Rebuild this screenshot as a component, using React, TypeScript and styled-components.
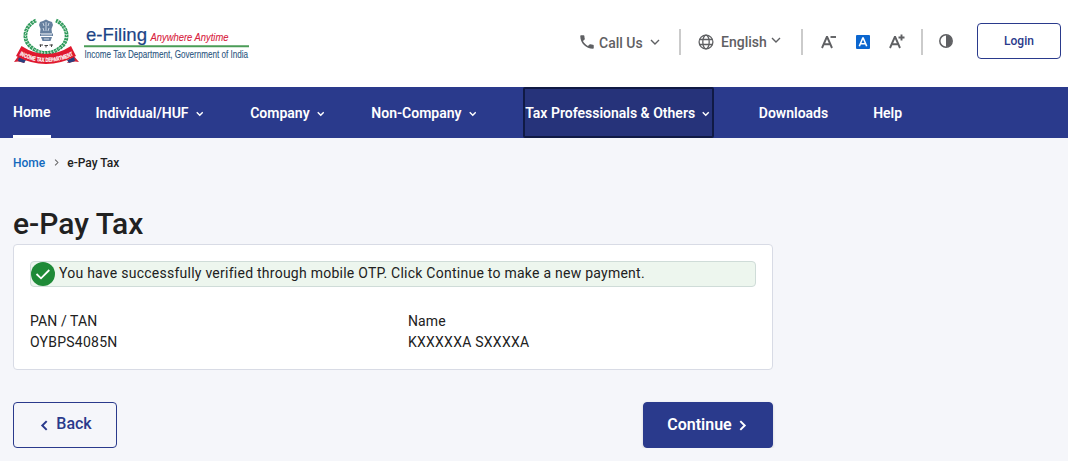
import React from "react";
import styled, { createGlobalStyle, css } from "styled-components";

const navy = "#2a3a8c";
const grey = "#5f6063";

const GlobalStyle = createGlobalStyle`
  * {
    box-sizing: border-box;
  }

  body {
    margin: 0;
    background: #f5f6fa;
    color: #212121;
    font-family: Roboto, "Liberation Sans", sans-serif;
    overflow: hidden;
  }

  button {
    font-family: inherit;
    cursor: pointer;
  }
`;

const Header = styled.header`
  display: flex;
  align-items: flex-start;
  justify-content: space-between;
  height: 87px;
  padding: 16px 7px 0 13px;
  background: #fff;
`;

const LogoImage = styled.svg`
  overflow: visible;
`;

const Tools = styled.div`
  display: flex;
  align-items: center;
  height: 36px;
  margin-top: 7px;
`;

const ToolItem = styled.button<{ $width: number; $indent?: number }>`
  display: flex;
  align-items: center;
  width: ${(props) => props.$width}px;
  height: 36px;
  padding: 2px 0 0 ${(props) => props.$indent || 0}px;
  border: 0;
  background: none;
  color: ${grey};
  font-size: 14px;
  font-weight: 500;
`;

const ToolLabel = styled.span<{ $before: number; $after: number; $lift?: number }>`
  margin: 0 ${(props) => props.$after}px ${(props) => props.$lift || 0}px
    ${(props) => props.$before}px;
  padding-top: 1px;
  white-space: nowrap;

  & + svg {
    margin-bottom: ${(props) => (props.$lift || 0) * 2}px;
  }
`;

const Divider = styled.span`
  width: 2px;
  height: 26px;
  margin-top: 2px;
  background: #cbcbcb;
`;

const FontTools = styled.div`
  display: flex;
  align-items: center;
  justify-content: space-between;
  width: 84px;
  margin: 1px 16px 0 18px;
`;

const ContrastTool = styled.div`
  display: flex;
  margin: 0 24px 0 16px;
`;

const LoginButton = styled.button`
  width: 84px;
  height: 36px;
  border: 1px solid ${navy};
  border-radius: 4px;
  background: #fff;
  color: ${navy};
  font-size: 12px;
  font-weight: 500;
`;

const Nav = styled.nav`
  display: flex;
  gap: 45px;
  height: 51px;
  padding-left: 13px;
  background: ${navy};
`;

const NavItem = styled.a<{ $active?: boolean; $focused?: boolean }>`
  display: flex;
  align-items: center;
  height: 51px;
  color: #fff;
  font-size: 14px;
  font-weight: 600;
  white-space: nowrap;

  svg {
    margin: 3px 2px 0 7.2px;
  }

  ${(props) =>
    props.$active &&
    css`
      padding-bottom: 1px;
      border-top: 3px solid transparent;
      border-bottom: 3px solid #fff;
    `}

  ${(props) =>
    props.$focused &&
    css`
      border: 2px solid #101a45;
      border-radius: 2px;
      background: #26337a;
    `}
`;

const Main = styled.main`
  width: 773px;
  padding-left: 13px;
`;

const Breadcrumb = styled.div`
  display: flex;
  align-items: center;
  height: 50px;
  font-size: 12px;
  font-weight: 500;

  a {
    color: #1269bd;
  }

  svg {
    margin: 0 7px 2px 8px;
    color: #666;
  }
`;

const Title = styled.h1`
  margin: 15px 0 0;
  height: 41px;
  font-size: 30px;
  font-weight: 500;
  line-height: 41px;
`;

const Card = styled.section`
  height: 126px;
  padding: 16px;
  border: 1px solid #d8dbe5;
  border-radius: 4px;
  background: #fff;
`;

const Notice = styled.div`
  display: flex;
  align-items: center;
  gap: 4px;
  height: 26px;
  border: 1px solid #cfdcd8;
  border-radius: 4px;
  background: #edf6ee;
  font-size: 14px;
  letter-spacing: 0.25px;
`;

const NoticeText = styled.span`
  padding-bottom: 2px;
`;

const Details = styled.dl`
  display: grid;
  grid-template-columns: 378px 1fr;
  margin: 24px 0 0;
  font-size: 14px;
  line-height: 21px;
  letter-spacing: 0.25px;

  dt {
    letter-spacing: 0.1px;
  }

  dd {
    margin: 0;
  }
`;

const Actions = styled.div`
  display: flex;
  justify-content: space-between;
  margin-top: 32px;
`;

const ActionButton = styled.button<{ $primary?: boolean }>`
  display: flex;
  align-items: center;
  justify-content: center;
  gap: ${(props) => (props.$primary ? 5 : 6)}px;
  width: ${(props) => (props.$primary ? 130 : 104)}px;
  height: 46px;
  padding: ${(props) => (props.$primary ? "0 1px 1px 0" : "0 0 3px 1px")};
  border: 1px solid ${navy};
  border-radius: 4px;
  background: ${(props) => (props.$primary ? navy : "transparent")};
  box-shadow: ${(props) =>
    props.$primary ? "0 1px 3px rgba(0, 0, 0, 0.15)" : "none"};
  color: ${(props) => (props.$primary ? "#fff" : navy)};
  font-size: 16px;
  font-weight: ${(props) => (props.$primary ? 600 : 500)};

  svg {
    margin-top: ${(props) => (props.$primary ? 1 : 3)}px;
  }
`;

type ChevronProps = {
  direction?: "down" | "left" | "right";
  size?: number;
  stroke?: number;
};

const chevronPaths = {
  down: "M1 3L5 7L9 3",
  left: "M7 1L3 5L7 9",
  right: "M3 1L7 5L3 9",
};

function Chevron({ direction = "down", size = 10, stroke = 1.5 }: ChevronProps) {
  return (
    <svg width={size} height={size} viewBox="0 0 10 10" fill="none">
      <path
        d={chevronPaths[direction]}
        stroke="currentColor"
        strokeWidth={stroke}
      />
    </svg>
  );
}

function Logo() {
  return (
    <LogoImage width="240" height="52" viewBox="13 16 240 52">
      {/* laurel wreath */}
      <g fill="none" stroke="#2f9a5b">
        <path d="M36 20.500C24 26 22 40 31 47Q38 53 46 53Q54 53 61 47C70 40 68 26 56 20.500" strokeWidth="3.800" strokeDasharray="2.600 0.600" />
        <path d="M36 20.500C24 26 22 40 31 47Q38 53 46 53Q54 53 61 47C70 40 68 26 56 20.500" stroke="#d3ecdb" strokeWidth="1" strokeDasharray="1.200 1.600" />
      </g>
      {/* lion capital */}
      <g fill="#66809f">
        <path d="M43 21L46 19.500L49 21L52 22L53 25L51.500 29L52 33H40L40.500 29L39 25L40 22Z" />
        <path d="M40 33.500H53V36H40Z" />
        <path d="M41 37H52L50.500 41H42.500Z" />
      </g>
      <path d="M43 23L44 26M49 23L48 26M46 22V31M43 28L44 31M49 28L48 31M41 34.800H52M44 39H49" stroke="#d5dfeb" strokeWidth="0.900" />
      <path d="M39.500 45H43M40.500 44.500V47M44.500 45.500H48M46 45V47.500M49.500 45H53M51.500 44.500V47" stroke="#444" strokeWidth="1" />
      {/* ribbon */}
      <path d="M14 62L19 55L25 63L18 61.500ZM79 62L73 55L67 63L75 61.500Z" fill="#d71f35" />
      <path d="M19 57L26 60L24 63L18 61ZM74 57L67 60L69 63L75 61Z" fill="#29407f" />
      <path d="M21.500 46Q46 62 71 46L76 56Q46 72 16 56Z" fill="#e0192f" />
      <path id="ribbonLine" d="M19.500 55Q46 69 74 55" fill="none" />
      <text fill="#fff" stroke="#fff" strokeWidth="0.200" fontFamily="Liberation Sans, sans-serif" fontSize="6" fontWeight="700">
        <textPath href="#ribbonLine" textLength="56" lengthAdjust="spacingAndGlyphs">
          INCOME TAX DEPARTMENT
        </textPath>
      </text>
      <g fontFamily="Liberation Sans, sans-serif">
        <text x="86" y="40.500" fill="#1d4486" stroke="#1d4486" strokeWidth="0.200" fontSize="19" textLength="61" lengthAdjust="spacingAndGlyphs">
          e-Filing
        </text>
        <text x="150.500" y="40.500" fill="#d8203c" stroke="#d8203c" strokeWidth="0.100" fontSize="11.500" fontStyle="italic" textLength="78" lengthAdjust="spacingAndGlyphs">
          Anywhere Anytime
        </text>
        <path d="M84 46.300H249" stroke="#4b9c57" strokeWidth="2" />
        <text x="84.500" y="57.500" fill="#2b5580" stroke="#2b5580" strokeWidth="0.100" fontSize="10.500" textLength="163.500" lengthAdjust="spacingAndGlyphs">
          Income Tax Department, Government of India
        </text>
      </g>
    </LogoImage>
  );
}

function PhoneIcon() {
  return (
    <svg width="18" height="18" viewBox="0 0 24 24" fill={grey}>
      <path d="M6.620 10.790c1.440 2.830 3.760 5.140 6.590 6.590l2.200-2.200c.27-.27.67-.36 1.020-.24 1.120.37 2.330.57 3.570.57.55 0 1 .45 1 1V20c0 .55-.45 1-1 1-9.390 0-17-7.610-17-17 0-.55.45-1 1-1h3.500c.55 0 1 .45 1 1 0 1.250.2 2.450.57 3.570.11.35.03.74-.25 1.020l-2.200 2.200z" />
    </svg>
  );
}

function GlobeIcon() {
  return (
    <svg width="16" height="16" viewBox="0 0 16 16" fill="none" stroke={grey} strokeWidth="1.300">
      <circle cx="8" cy="8" r="6.900" />
      <ellipse cx="8" cy="8" rx="3.200" ry="6.900" />
      <path d="M1.500 5.500H14.500M1.500 10.500H14.500" />
    </svg>
  );
}

function FontSizeIcon({ sign }: { sign: "minus" | "plus" }) {
  return (
    <svg width="16" height="16" viewBox="0 0 16 16" fill="none" stroke={grey}>
      <path d="M1 14L5.800 3H6.200L11 14M3 10.300H9" strokeWidth="1.900" />
      <path
        d={sign === "plus" ? "M9.500 3.500H15.500M12.500 0.500V6.500" : "M9.500 3H15"}
        strokeWidth="1.900"
      />
    </svg>
  );
}

function FontResetIcon() {
  return (
    <svg width="14" height="14" viewBox="0 0 14 14" fill="none">
      <rect width="14" height="14" rx="1" fill="#0b66cf" />
      <path d="M3.300 11.300L6.800 3H7.200L10.700 11.300M4.500 8.700H9.500" stroke="#fff" strokeWidth="1.600" />
    </svg>
  );
}

function ContrastIcon() {
  return (
    <svg width="14" height="14" viewBox="0 0 14 14">
      <circle cx="7" cy="7" r="6.200" fill="none" stroke={grey} strokeWidth="1.500" />
      <path d="M7 1A6 6 0 0 1 7 13Z" fill={grey} />
    </svg>
  );
}

function SuccessIcon() {
  return (
    <svg width="24" height="24" viewBox="0 0 24 24" fill="none">
      <circle cx="12" cy="12" r="12" fill="#1e8a37" />
      <path d="M5.500 12L10 16.300L18.300 8" stroke="#fff" strokeWidth="1.800" />
    </svg>
  );
}

type NavEntry = {
  label: string;
  menu?: boolean;
  active?: boolean;
  focused?: boolean;
};

const navEntries: NavEntry[] = [
  { label: "Home", active: true },
  { label: "Individual/HUF", menu: true },
  { label: "Company", menu: true },
  { label: "Non-Company", menu: true },
  { label: "Tax Professionals & Others", menu: true, focused: true },
  { label: "Downloads" },
  { label: "Help" },
];

export default function App() {
  return (
    <>
      <GlobalStyle />
      <Header>
        <Logo />
        <Tools>
          <ToolItem $width={101}>
            <PhoneIcon />
            <ToolLabel $before={3} $after={7}>Call Us</ToolLabel>
            <Chevron stroke={1.4} />
          </ToolItem>
          <Divider />
          <ToolItem $width={120} $indent={17}>
            <GlobeIcon />
            <ToolLabel $before={7} $after={4} $lift={2}>English</ToolLabel>
            <Chevron stroke={1.4} />
          </ToolItem>
          <Divider />
          <FontTools>
            <FontSizeIcon sign="minus" />
            <FontResetIcon />
            <FontSizeIcon sign="plus" />
          </FontTools>
          <Divider />
          <ContrastTool>
            <ContrastIcon />
          </ContrastTool>
          <LoginButton>Login</LoginButton>
        </Tools>
      </Header>
      <Nav>
        {navEntries.map((entry) => (
          <NavItem
            key={entry.label}
            $active={entry.active}
            $focused={entry.focused}
          >
            {entry.label}
            {entry.menu && <Chevron size={7.5} stroke={1.9} />}
          </NavItem>
        ))}
      </Nav>
      <Main>
        <Breadcrumb>
          <a>Home</a>
          <Chevron direction="right" size={7} />
          <span>e-Pay Tax</span>
        </Breadcrumb>
        <Title>e-Pay Tax</Title>
        <Card>
          <Notice>
            <SuccessIcon />
            <NoticeText>
              You have successfully verified through mobile OTP. Click Continue
              to make a new payment.
            </NoticeText>
          </Notice>
          <Details>
            <dt>PAN / TAN</dt>
            <dt>Name</dt>
            <dd>OYBPS4085N</dd>
            <dd>KXXXXXA SXXXXA</dd>
          </Details>
        </Card>
        <Actions>
          <ActionButton>
            <Chevron direction="left" size={11} stroke={1.8} />
            Back
          </ActionButton>
          <ActionButton $primary>
            Continue
            <Chevron direction="right" size={11} stroke={1.8} />
          </ActionButton>
        </Actions>
      </Main>
    </>
  );
}
